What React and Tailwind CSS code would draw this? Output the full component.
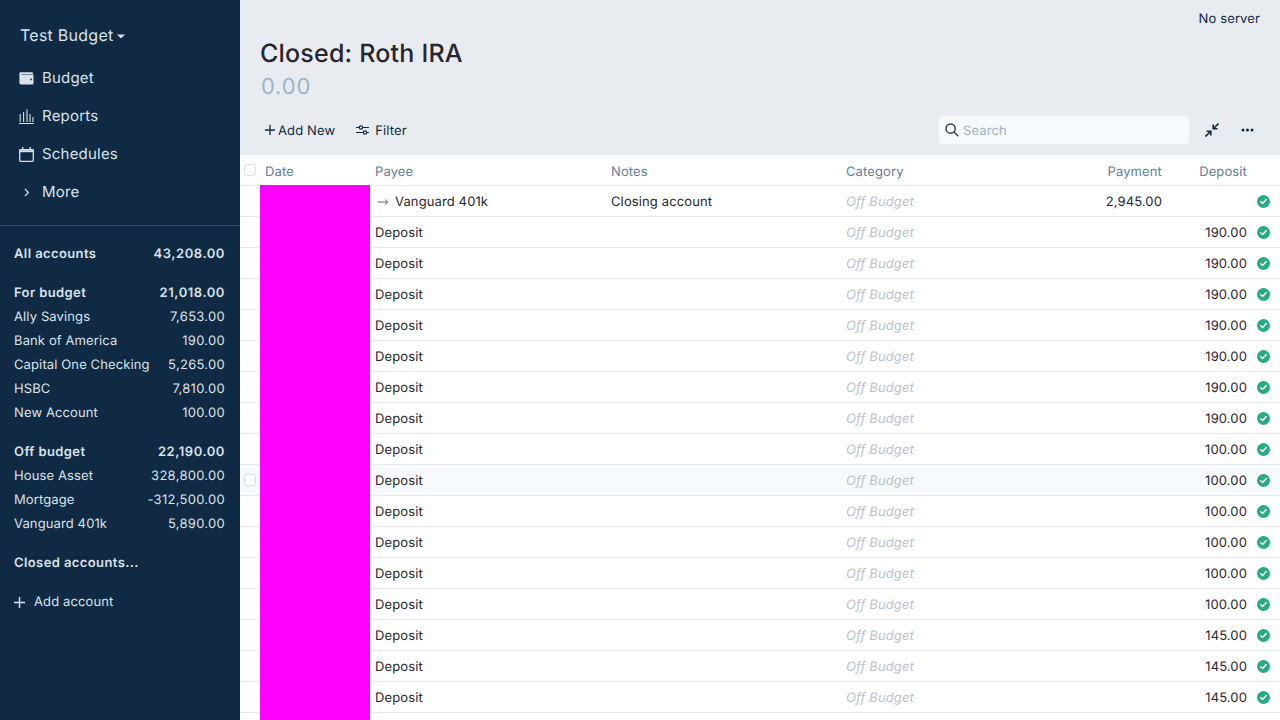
import React from "react";

const font = { fontFamily: "Inter, sans-serif" };

const Nav = ({ icon, label }) => (
  <div className="flex h-[38px] items-center pl-[19px] text-[15px] tracking-[0.2px] text-[#d9e2ec]">
    <span className="flex h-[16px] w-[15px] shrink-0 items-center justify-center">{icon}</span>
    <span className="ml-[8px]">{label}</span>
  </div>
);

const Account = ({ name, value, bold }) => (
  <div className={`flex h-[24px] items-center justify-between pl-[14px] pr-[15px] pt-[2px] text-[13px] text-[#d9e2ec] ${bold ? "font-semibold tracking-[0.4px]" : "tracking-[0.12px]"}`}>
    <span>{name}</span>
    {value && <span className={bold ? "tracking-[0.55px]" : "tracking-[0.28px]"}>{value}</span>}
  </div>
);

const Check = () => (
  <svg width="13" height="13" viewBox="0 0 13 13">
    <circle cx="6.5" cy="6.5" r="6.5" fill="#27ab83" />
    <path d="M3.7 6.8 5.6 8.6 9.3 4.6" fill="none" stroke="#fff" strokeWidth="1.4" strokeLinecap="round" strokeLinejoin="round" />
  </svg>
);

const Box = () => <div className="h-[12px] w-[12px] rounded-[3px] border border-[#d9e2ec] bg-white" />;

const rows = [
  ["Vanguard 401k", "Closing account", "2,945.00", ""],
  ...["190.00", "190.00", "190.00", "190.00", "190.00", "190.00", "190.00", "100.00", "100.00", "100.00", "100.00", "100.00", "100.00", "145.00", "145.00", "145.00"].map((d) => ["Deposit", "", "", d]),
];

const Row = ({ r, i }) => (
  <div className={`flex h-[31px] shrink-0 items-center border-b border-[#e8ecf0] text-[13px] leading-[22px] tracking-[0.12px] text-[#272630] ${i === 9 ? "bg-[#f7fafc]" : "bg-white"}`}>
    <div className="flex w-[20px] justify-center">{i === 9 && <Box />}</div>
    <div className="w-[110px]" />
    <div className="flex h-[20px] w-[236px] items-start pl-[5px]">
      {i === 0 && (
        <svg className="mt-[7px] mr-[6px] ml-[2px]" width="12" height="8" viewBox="0 0 12 8" fill="none" stroke="#6b6b75" strokeWidth="1">
          <path d="M0.5 4H10.5M8 1.5 10.8 4 8 6.5" />
        </svg>
      )}
      <span>{r[0]}</span>
    </div>
    <div className="h-[20px] w-[235px] pl-[5px]">{r[1]}</div>
    <div className="h-[20px] w-[235px] pl-[5px] text-[#bcc2c9] italic">Off Budget</div>
    <div className="h-[20px] w-[91px] pr-[5px] text-right">{r[2]}</div>
    <div className="h-[20px] w-[85px] pr-[5px] text-right">{r[3]}</div>
    <div className="flex flex-1 justify-end pr-[10px]"><Check /></div>
  </div>
);

export default function App() {
  return (
    <div className="flex h-screen w-full overflow-hidden bg-[#e8ecf0] [text-rendering:geometricPrecision]" style={font}>
      <aside className="flex w-[240px] shrink-0 flex-col bg-[#102a43]">
        <div className="flex h-[59px] items-end pb-[12px] pl-[20px] text-[16px] tracking-[0.25px] text-[#d9e2ec]">
          <span>Test Budget</span>
          <svg className="mb-[8px] ml-[4px]" width="8" height="5" viewBox="0 0 8 5"><path d="M0 0.5H8L4 4.5Z" fill="#d9e2ec" /></svg>
        </div>
        <div className="border-b border-[#334e68] pb-[14px]">
          <Nav label="Budget" icon={
            <svg width="15" height="13" viewBox="0 0 15 13"><path d="M1.5 0.3H13a1 1 0 0 1 1 1v.7H2.5v.6H13.5a1 1 0 0 1 1 1V11.2a1.2 1.2 0 0 1-1.2 1.2H2A1.6 1.6 0 0 1 .4 10.8V1.4A1.1 1.1 0 0 1 1.5.3Z" fill="#d9e2ec" /><circle cx="12" cy="7.4" r=".9" fill="#102a43" /></svg>
          } />
          <Nav label="Reports" icon={
            <svg width="15" height="15" viewBox="0 0 15 15" fill="none" stroke="#d9e2ec" strokeWidth="1.1"><path d="M0 14.5H14.8M1.2 13V5M4.6 13V3M8 13V.5M11 13V5M13.9 13V8" /></svg>
          } />
          <Nav label="Schedules" icon={
            <svg width="15" height="15" viewBox="0 0 15 15" fill="none" stroke="#d9e2ec" strokeWidth="1.3"><rect x=".7" y="2.7" width="13.6" height="11.6" rx=".8" /><path d="M.7 4.2H14.3" strokeWidth="2" /><path d="M3.8 0V2.5M11.2 0V2.5" /></svg>
          } />
          <Nav label="More" icon={
            <svg width="6" height="9" viewBox="0 0 6 9" fill="none" stroke="#d9e2ec" strokeWidth="1.2"><path d="M1 1 4.4 4.5 1 8" /></svg>
          } />
        </div>
        <div className="flex flex-col pt-[16px]">
          <Account name="All accounts" value="43,208.00" bold />
          <div className="mt-[15px]">
            <Account name="For budget" value="21,018.00" bold />
            <Account name="Ally Savings" value="7,653.00" />
            <Account name="Bank of America" value="190.00" />
            <Account name="Capital One Checking" value="5,265.00" />
            <Account name="HSBC" value="7,810.00" />
            <Account name="New Account" value="100.00" />
          </div>
          <div className="mt-[15px]">
            <Account name="Off budget" value="22,190.00" bold />
            <Account name="House Asset" value="328,800.00" />
            <Account name="Mortgage" value="-312,500.00" />
            <Account name="Vanguard 401k" value="5,890.00" />
          </div>
          <div className="mt-[15px]"><Account name="Closed accounts..." bold /></div>
          <div className="mt-[15px] flex h-[24px] items-center pl-[14px] text-[13px] tracking-[0.12px] text-[#d9e2ec]">
            <svg width="11" height="11" viewBox="0 0 11 11" stroke="#d9e2ec" strokeWidth="1.4"><path d="M5.5 0V11M0 5.5H11" /></svg>
            <span className="ml-[9px] pt-[2px]">Add account</span>
          </div>
        </div>
      </aside>

      <main className="flex min-w-0 flex-1 flex-col">
        <div className="flex h-[155px] shrink-0 flex-col px-[20px]">
          <div className="flex justify-end pt-[10px] text-[13px] tracking-[0.12px] text-[#102a43]">No server</div>
          <h1 className="mt-[9px] text-[25px] leading-[30px] font-medium tracking-[0.2px] text-[#272630]">Closed: Roth IRA</h1>
          <div className="mt-[5px] pl-[1px] text-[22px] leading-[27px] tracking-[0.8px] text-[#9fb3c8]">0.00</div>
          <div className="mt-[15px] flex items-center text-[13px] tracking-[0.12px] text-[#102a43]">
            <div className="ml-[5px] flex items-center">
              <svg width="10" height="10" viewBox="0 0 10 10" stroke="#102a43" strokeWidth="1.3"><path d="M5 0V10M0 5H10" /></svg>
              <span className="ml-[3px] pt-[4px]">Add New</span>
            </div>
            <div className="ml-[21px] flex items-center">
              <svg width="13" height="10" viewBox="0 0 13 10" fill="none" stroke="#102a43" strokeWidth="1.2"><path d="M0 2.5H3M7 2.5H13M0 7.5H7M11 7.5H13" /><circle cx="5" cy="2.5" r="1.7" /><circle cx="9" cy="7.5" r="1.7" /></svg>
              <span className="ml-[6px] pt-[4px]">Filter</span>
            </div>
            <div className="ml-auto flex h-[28px] w-[250px] items-center rounded-[4px] bg-[#f7fafc] pl-[6px]">
              <svg width="14" height="14" viewBox="0 0 14 14" fill="none" stroke="#243b53" strokeWidth="1.4"><circle cx="5.6" cy="5.6" r="4.6" /><path d="M8.8 8.8 13.3 13.3" /></svg>
              <span className="ml-[4px] pt-[4px] text-[#9fb3c8]">Search</span>
            </div>
            <div className="ml-[16px] flex w-[14px] justify-center">
              <svg width="14" height="14" viewBox="0 0 14 14" fill="none" stroke="#102a43" strokeWidth="1.6"><path d="M13.5 .5 8.5 5.5M8.2 1.5V5.8H12.5" /><path d="M.5 13.5 5.5 8.5M1.5 8.2H5.8V12.5" /></svg>
            </div>
            <div className="ml-[22px] mr-[6px] flex">
              <svg width="13" height="4" viewBox="0 0 13 4" fill="#102a43"><circle cx="2" cy="2" r="1.5" /><circle cx="6.5" cy="2" r="1.5" /><circle cx="11" cy="2" r="1.5" /></svg>
            </div>
          </div>
        </div>

        <div className="flex min-h-0 flex-1 flex-col bg-white">
          <div className="flex h-[31px] shrink-0 items-center border-b border-[#e8ecf0] text-[13px] tracking-[0.12px] text-[#627d98]">
            <div className="flex w-[20px] justify-center"><Box /></div>
            <div className="w-[110px] pl-[5px] pt-[6px]">Date</div>
            <div className="w-[236px] pl-[5px] pt-[6px]">Payee</div>
            <div className="w-[235px] pl-[5px] pt-[6px]">Notes</div>
            <div className="w-[235px] pl-[5px] pt-[6px]">Category</div>
            <div className="w-[91px] pr-[5px] pt-[6px] text-right">Payment</div>
            <div className="w-[85px] pr-[5px] pt-[6px] text-right">Deposit</div>
          </div>
          <div className="relative flex min-h-0 flex-1 flex-col">
            {rows.map((r, i) => <Row key={i} r={r} i={i} />)}
            <div className="absolute -top-[1px] bottom-0 left-[20px] w-[110px] bg-[#ff00ff]" />
          </div>
        </div>
      </main>
    </div>
  );
}
